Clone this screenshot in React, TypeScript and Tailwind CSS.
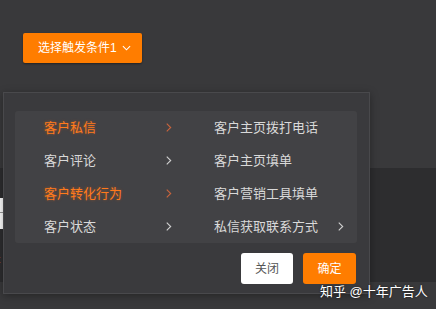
import React from 'react';

const leftItems = [
  { label: '客户私信', active: true },
  { label: '客户评论', active: false },
  { label: '客户转化行为', active: true },
  { label: '客户状态', active: false },
];

const rightItems = [
  { label: '客户主页拨打电话', sub: false },
  { label: '客户主页填单', sub: false },
  { label: '客户营销工具填单', sub: false },
  { label: '私信获取联系方式', sub: true },
];

function Chevron({ className }: { className?: string }) {
  return (
    <svg viewBox="0 0 8 12" className={className} fill="none" stroke="currentColor" strokeWidth="1.3">
      <path d="M2 1.5 L6.5 6 L2 10.5" />
    </svg>
  );
}

export default function App() {
  return (
    <div
      className="relative w-[436px] h-[309px] overflow-hidden bg-[#39393b]"
      style={{ fontFamily: '"Liberation Sans", "Noto Sans CJK SC", sans-serif' }}
    >
      {/* page behind the popup */}
      <div className="pt-[33px] pl-[23px]">
        <button className="flex items-center h-[30px] w-[119px] pl-[15px] rounded-[2px] bg-[#ff7d00] text-white text-[12px] shadow-[0_1px_2px_rgba(0,0,0,0.4)]">
          选择触发条件1
          <svg viewBox="0 0 10 6" className="ml-[5px] w-[9px] h-[6px]" fill="none" stroke="currentColor" strokeWidth="1.2">
            <path d="M1 1 L5 5 L9 1" />
          </svg>
        </button>
      </div>
      <div className="mt-[105px] flex h-[114px] bg-[#2d2d2f]">
        <div className="w-[4px] flex flex-col pt-[30px] border-r border-[#232325]">
          <div className="h-[15px] bg-white border-b border-[#9a9a9a]" />
          <div className="h-[16px] bg-white" />
          <div className="mt-[25px] text-[11px] leading-none text-[#f0a050] -ml-[3px]">t</div>
        </div>
      </div>

      {/* popup */}
      <div className="absolute left-[3px] top-[92px] w-[367px] h-[202px] bg-[#3a3a3d] border border-[#49494c] shadow-[0_2px_8px_rgba(0,0,0,0.35)] pt-[18px] pl-[11px]">
        <div className="w-[342px] h-[132px] bg-[#424245] rounded-[3px] flex">
          <div className="w-[185px] flex flex-col">
            {leftItems.map((it) => (
              <div
                key={it.label}
                className={`h-[33px] flex items-center justify-between pl-[29px] pr-[28px] text-[13px] ${
                  it.active ? 'text-[#ff7a1c] [text-shadow:0_0_3px_rgba(255,110,20,0.45)]' : 'text-[#d9d9d9]'
                }`}
              >
                <span>{it.label}</span>
                <Chevron className={`w-[7px] h-[11px] ${it.active ? 'text-[#c9643c]' : 'text-[#cfcfcf]'}`} />
              </div>
            ))}
          </div>
          <div className="flex-1 flex flex-col">
            {rightItems.map((it) => (
              <div key={it.label} className="h-[33px] flex items-center justify-between pl-[14px] pr-[13px] text-[13px] text-[#d9d9d9]">
                <span>{it.label}</span>
                {it.sub && <Chevron className="w-[7px] h-[11px] text-[#cfcfcf]" />}
              </div>
            ))}
          </div>
        </div>
        <div className="w-[342px] flex justify-end gap-[10px] mt-[10px] pr-[1px]">
          <button className="w-[52px] h-[31px] rounded-[3px] bg-white text-[12px] text-[#555]">关闭</button>
          <button className="w-[53px] h-[31px] rounded-[3px] bg-[#ff7d00] text-[12px] text-white">确定</button>
        </div>
      </div>

      {/* watermark */}
      <div className="absolute left-[320px] top-[283px] text-[13px] leading-[17px] text-white [text-shadow:0_0_2px_rgba(0,0,0,0.6)] whitespace-nowrap">
        知乎 @十年广告人
      </div>
    </div>
  );
}
